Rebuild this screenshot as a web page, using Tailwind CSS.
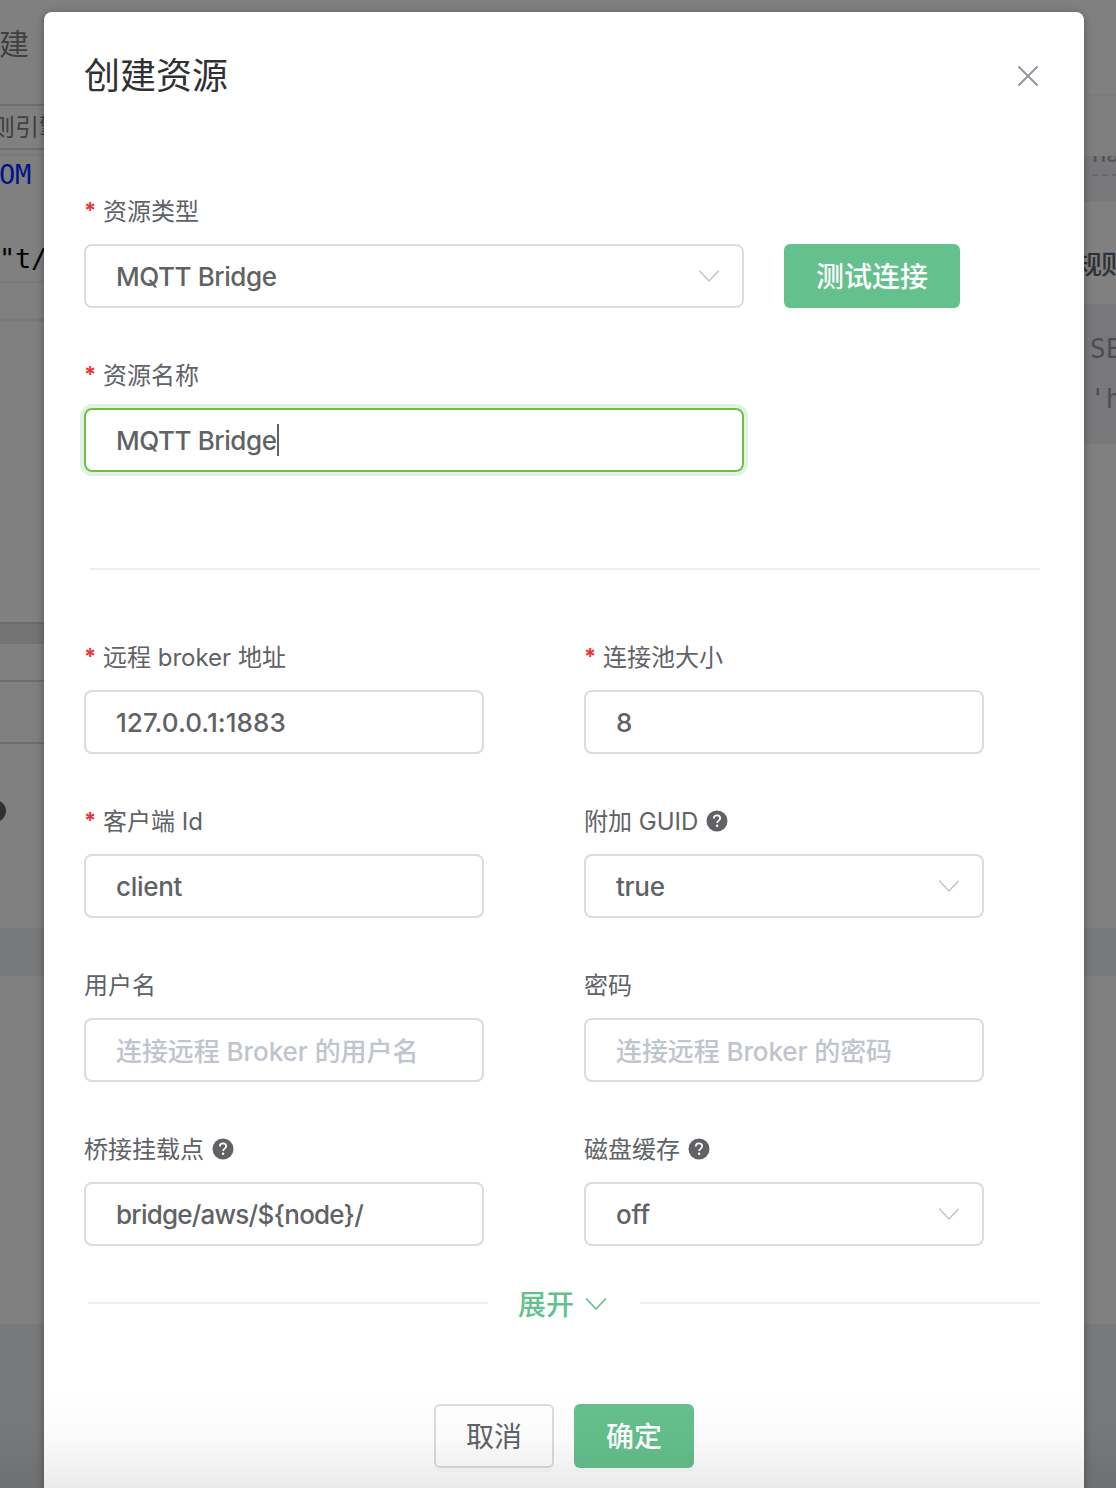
<!DOCTYPE html>
<html lang="zh-CN">
<head>
<meta charset="utf-8">
<title>创建资源</title>
<script src="https://cdn.jsdelivr.net/npm/@tailwindcss/browser@4"></script>
</head>
<body class="relative h-[1488px] w-[1116px] overflow-hidden bg-[#808080] font-[Inter,'Noto_Sans_CJK_SC',sans-serif] text-[#606266]">

<!-- dimmed page behind the dialog -->
<div class="flex h-full justify-between whitespace-nowrap">
  <div class="flex w-20 flex-col overflow-hidden">
    <div class="flex h-[104px] shrink-0 items-start pt-6 text-[30px] leading-10 text-[#404040]"><span class="-ml-px">建</span></div>
    <div class="flex h-[46px] shrink-0 items-center border-y-2 border-[#6e6e6e] pt-0.5 text-2xl text-[#414141]"><span class="-ml-[9px]">则引擎</span></div>
    <div class="mt-1 h-0.5 shrink-0 bg-[#7a7a7a]"></div>
    <div class="flex h-[125px] shrink-0 flex-col pt-px font-['DejaVu_Sans_Mono',monospace] text-[27px] leading-9 tracking-[-0.3px]">
      <span class="-ml-px text-[#001489]">OM</span>
      <span class="-ml-px mt-12 text-black">"t/</span>
    </div>
    <div class="h-0.5 shrink-0 bg-[#7a7a7a]"></div>
    <div class="mt-[35px] h-1 shrink-0 bg-[#797979]"></div>
    <div class="mt-[300px] h-[22px] shrink-0 border-t-2 border-[#6c6c6c] bg-[#747474]"></div>
    <div class="mt-9 h-0.5 shrink-0 bg-[#6d6d6d]"></div>
    <div class="mt-[60px] h-0.5 shrink-0 bg-[#6d6d6d]"></div>
    <div class="-ml-4 mt-14 size-[22px] shrink-0 rounded-full bg-[#303030]"></div>
    <div class="mt-[106px] h-12 shrink-0 bg-[#77797b]"></div>
    <div class="mt-[348px] grow bg-[#77797b]"></div>
  </div>
  <div class="flex w-[60px] flex-col overflow-hidden">
    <div class="mt-[94px] h-[62px] shrink-0 border-t border-[#7b7b7b] bg-[#7e7e7e]"></div>
    <div class="flex h-[46px] shrink-0 flex-col overflow-hidden bg-[#78787b] pl-9">
      <div class="h-[18px] shrink-0 overflow-hidden text-2xl font-medium leading-none text-[#525458]"><div class="-mt-3.5">name</div></div>
      <div class="flex gap-1"><i class="h-0.5 w-1.5 shrink-0 bg-[#68686b]"></i><i class="h-0.5 w-1.5 shrink-0 bg-[#68686b]"></i><i class="h-0.5 w-1.5 shrink-0 bg-[#68686b]"></i></div>
    </div>
    <div class="flex h-[102px] shrink-0 items-center pl-5 pt-[22px] text-[26px] font-medium tracking-[-1px] text-[#303133]">规则</div>
    <div class="h-[140px] shrink-0 bg-[#78787b] pl-[34px] pt-5 font-['DejaVu_Sans_Mono',monospace] text-[26px] leading-[50px] text-[#4c4e52]">
      <div>SE</div><div>'h</div>
    </div>
    <div class="mt-[484px] h-12 shrink-0 bg-[#77797b]"></div>
    <div class="mt-[348px] grow bg-[#77797b]"></div>
  </div>
</div>

<!-- dialog -->
<div class="absolute left-11 top-3 flex h-[1490px] w-[1040px] flex-col rounded-lg bg-white px-10 shadow-[0_2px_8px_rgba(0,0,0,0.35)]">
  <div class="mb-10 flex h-[126px] shrink-0 items-center justify-between">
    <h1 class="pt-0.5 text-4xl leading-none text-[#303133]">创建资源</h1>
    <svg class="mr-1.5 mt-0.5 size-5" viewBox="0 0 20 20" fill="none" stroke="#909399" stroke-width="1.9" stroke-linecap="round"><path d="M1 1 19 19M19 1 1 19"/></svg>
  </div>

  <div class="mb-[34px] flex items-end gap-10">
    <div class="w-[660px]">
      <div class="flex h-[66px] items-center pt-0.5 text-2xl"><span class="mr-2 w-[11px] pb-0.5 text-[22px] font-bold text-[#e53935]">*</span>资源类型</div>
      <div class="flex h-16 items-center justify-between rounded-lg border-2 border-[#dcdcdc] pl-[30px] pr-[22px] text-[26px] font-medium">
        <span class="tracking-[-0.43px]">MQTT Bridge</span>
        <svg class="h-3 w-[22px]" viewBox="0 0 22 12" fill="none" stroke="#c0c4cc" stroke-width="1.5" stroke-linecap="round" stroke-linejoin="round"><path d="M1.6 1 11 11 20.4 1"/></svg>
      </div>
    </div>
    <div class="flex h-16 w-44 items-center justify-center rounded-md bg-[#64c08d] pt-0.5 text-[28px] font-medium text-white shadow-[0_4px_0_rgba(0,0,0,0.015)]">测试连接</div>
  </div>

  <div class="w-[660px]">
    <div class="flex h-[66px] items-center pt-0.5 text-2xl"><span class="mr-2 w-[11px] pb-0.5 text-[22px] font-bold text-[#e53935]">*</span>资源名称</div>
    <div class="flex h-16 items-center rounded-lg border-2 border-[#73c041] pl-[30px] text-[26px] font-medium shadow-[0_0_0_4px_#e0f2e8]">
      <span class="tracking-[-0.43px]">MQTT Bridge</span><i class="h-8 w-0.5 bg-[#606266]"></i>
    </div>
  </div>

  <div class="mb-[54px] ml-1.5 mr-1 mt-24 h-0.5 shrink-0 bg-[#ebeef0]"></div>

  <div class="grid grid-cols-[400px_400px] gap-x-[100px] gap-y-[34px]">
    <div>
      <div class="flex h-[66px] items-center pt-0.5 text-2xl"><span class="mr-2 w-[11px] pb-0.5 text-[22px] font-bold text-[#e53935]">*</span>远程 broker 地址</div>
      <div class="flex h-16 items-center rounded-lg border-2 border-[#dcdcdc] pl-[30px] text-[26px] font-medium tracking-[0.05px]">127.0.0.1:1883</div>
    </div>
    <div>
      <div class="flex h-[66px] items-center pt-0.5 text-2xl"><span class="mr-2 w-[11px] pb-0.5 text-[22px] font-bold text-[#e53935]">*</span>连接池大小</div>
      <div class="flex h-16 items-center rounded-lg border-2 border-[#dcdcdc] pl-[30px] text-[26px] font-medium">8</div>
    </div>
    <div>
      <div class="flex h-[66px] items-center pt-0.5 text-2xl"><span class="mr-2 w-[11px] pb-0.5 text-[22px] font-bold text-[#e53935]">*</span>客户端 Id</div>
      <div class="flex h-16 items-center rounded-lg border-2 border-[#dcdcdc] pl-[30px] text-[26px] font-medium tracking-[-0.3px]">client</div>
    </div>
    <div>
      <div class="flex h-[66px] items-center gap-2 text-2xl"><span class="pt-0.5">附加 GUID</span>
        <svg class="size-[22px]" viewBox="0 0 22 22" fill="none"><circle cx="11" cy="11" r="10.5" fill="#606266"/><path d="M7.8 8.6C7.8 6.5 9.1 5.3 11 5.3s3.2 1.2 3.2 3c0 2.3-3.1 2.4-3.1 4.7" stroke="#fff" stroke-width="1.7"/><circle cx="11.1" cy="15.8" r="1.2" fill="#fff"/></svg>
      </div>
      <div class="flex h-16 items-center justify-between rounded-lg border-2 border-[#dcdcdc] pl-[30px] pr-[22px] text-[26px] font-medium">
        <span class="tracking-[-0.3px]">true</span>
        <svg class="h-3 w-[22px]" viewBox="0 0 22 12" fill="none" stroke="#c0c4cc" stroke-width="1.5" stroke-linecap="round" stroke-linejoin="round"><path d="M1.6 1 11 11 20.4 1"/></svg>
      </div>
    </div>
    <div>
      <div class="flex h-[66px] items-center pt-0.5 text-2xl">用户名</div>
      <div class="flex h-16 items-center rounded-lg border-2 border-[#dcdcdc] pl-[30px] pt-0.5 text-[26px] font-medium tracking-[-0.07px] text-[#c0c4cc]">连接远程 Broker 的用户名</div>
    </div>
    <div>
      <div class="flex h-[66px] items-center pt-0.5 text-2xl">密码</div>
      <div class="flex h-16 items-center rounded-lg border-2 border-[#dcdcdc] pl-[30px] pt-0.5 text-[26px] font-medium tracking-[-0.1px] text-[#c0c4cc]">连接远程 Broker 的密码</div>
    </div>
    <div>
      <div class="flex h-[66px] items-center gap-2 text-2xl"><span class="pt-0.5">桥接挂载点</span>
        <svg class="size-[22px]" viewBox="0 0 22 22" fill="none"><circle cx="11" cy="11" r="10.5" fill="#606266"/><path d="M7.8 8.6C7.8 6.5 9.1 5.3 11 5.3s3.2 1.2 3.2 3c0 2.3-3.1 2.4-3.1 4.7" stroke="#fff" stroke-width="1.7"/><circle cx="11.1" cy="15.8" r="1.2" fill="#fff"/></svg>
      </div>
      <div class="flex h-16 items-center rounded-lg border-2 border-[#dcdcdc] pl-[30px] text-[26px] font-medium tracking-[-0.78px]">bridge/aws/${node}/</div>
    </div>
    <div>
      <div class="flex h-[66px] items-center gap-2 text-2xl"><span class="pt-0.5">磁盘缓存</span>
        <svg class="size-[22px]" viewBox="0 0 22 22" fill="none"><circle cx="11" cy="11" r="10.5" fill="#606266"/><path d="M7.8 8.6C7.8 6.5 9.1 5.3 11 5.3s3.2 1.2 3.2 3c0 2.3-3.1 2.4-3.1 4.7" stroke="#fff" stroke-width="1.7"/><circle cx="11.1" cy="15.8" r="1.2" fill="#fff"/></svg>
      </div>
      <div class="flex h-16 items-center justify-between rounded-lg border-2 border-[#dcdcdc] pl-[30px] pr-[22px] text-[26px] font-medium">
        <span class="tracking-[-0.2px]">off</span>
        <svg class="h-3 w-[22px]" viewBox="0 0 22 12" fill="none" stroke="#c0c4cc" stroke-width="1.5" stroke-linecap="round" stroke-linejoin="round"><path d="M1.6 1 11 11 20.4 1"/></svg>
      </div>
    </div>
  </div>

  <div class="ml-1 mt-[27px] flex h-[60px] shrink-0 items-center">
    <div class="h-0.5 w-[400px] bg-[#ebeef0]"></div>
    <div class="flex w-[152px] items-center pl-[30px] pt-[3px] text-[28px] font-medium text-[#64c08d]">展开
      <svg class="mb-0.5 ml-[11px] h-3 w-[22px]" viewBox="0 0 22 12" fill="none" stroke="#64c08d" stroke-width="1.7" stroke-linecap="round" stroke-linejoin="round"><path d="M1.6 1 11 11 20.4 1"/></svg>
    </div>
    <div class="h-0.5 w-[400px] bg-[#ebeef0]"></div>
  </div>

  <div class="mt-[71px] flex shrink-0 gap-5 pl-[350px] text-[28px]">
    <div class="flex h-16 w-[120px] items-center justify-center rounded-md border-2 border-[#dcdcdc] bg-white pt-0.5 shadow-[0_4px_0_rgba(0,0,0,0.015)]">取消</div>
    <div class="flex h-16 w-[120px] items-center justify-center rounded-md bg-[#64c08d] pt-0.5 font-medium text-white shadow-[0_4px_0_rgba(0,0,0,0.015)]">确定</div>
  </div>
</div>

<!-- fade along the bottom edge -->
<div class="absolute inset-x-0 bottom-0 h-24 bg-linear-to-b from-transparent via-black/2 to-black/8"></div>
</body>
</html>
